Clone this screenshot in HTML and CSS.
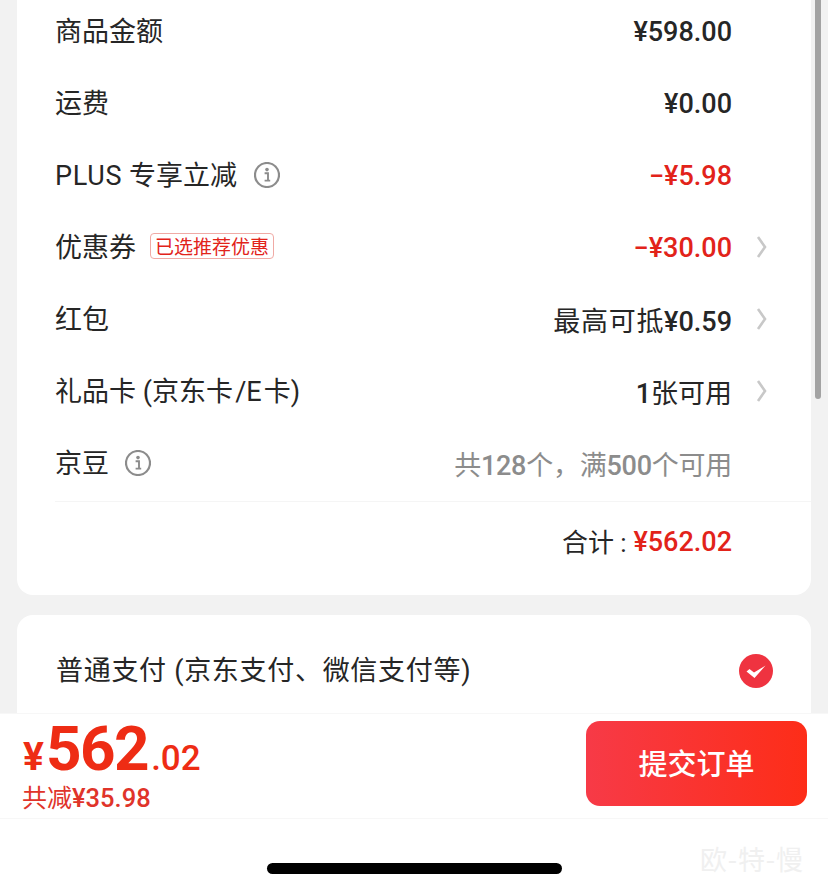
FILE: index.html
```html
<!DOCTYPE html>
<html lang="zh">
<head>
<meta charset="utf-8">
<title>提交订单</title>
<link rel="stylesheet" href="styles.css">
</head>
<body>
<main class="page">
  <section class="card summary">
    <div class="row"><div class="label">商品金额</div><div class="value num">¥598.00</div></div>
    <div class="row"><div class="label">运费</div><div class="value num">¥0.00</div></div>
    <div class="row">
      <div class="label latin"><span><span class="plus">PLUS</span> 专享立减</span>
        <svg class="info" viewBox="0 0 26 26"><circle cx="13" cy="13" r="12" fill="none" stroke="#8c8c8c" stroke-width="2.2"/><circle cx="13" cy="7.6" r="1.8" fill="#8c8c8c"/><path d="M10.6 11.2h3.4v7.2M10.6 18.6h5.6" fill="none" stroke="#8c8c8c" stroke-width="1.9"/></svg>
      </div>
      <div class="value num red">−¥5.98</div>
    </div>
    <div class="row has-arrow">
      <div class="label">优惠券<span class="tag">已选推荐优惠</span></div>
      <div class="value num red">−¥30.00</div>
      <svg class="arrow" viewBox="0 0 12 24"><path d="M2 2l7 10-7 10" fill="none" stroke="#c8c8c8" stroke-width="2.6"/></svg>
    </div>
    <div class="row has-arrow">
      <div class="label">红包</div>
      <div class="value num mixed"><span class="cjk wide">最高可抵</span>¥0.59</div>
      <svg class="arrow" viewBox="0 0 12 24"><path d="M2 2l7 10-7 10" fill="none" stroke="#c8c8c8" stroke-width="2.6"/></svg>
    </div>
    <div class="row has-arrow">
      <div class="label latin"><span>礼品卡 (<span class="tight">京东卡 /E 卡</span>)</span></div>
      <div class="value num mixed">1<span class="cjk">张可用</span></div>
      <svg class="arrow" viewBox="0 0 12 24"><path d="M2 2l7 10-7 10" fill="none" stroke="#c8c8c8" stroke-width="2.6"/></svg>
    </div>
    <div class="row">
      <div class="label"><span>京豆</span>
        <svg class="info near" viewBox="0 0 26 26"><circle cx="13" cy="13" r="12" fill="none" stroke="#8c8c8c" stroke-width="2.2"/><circle cx="13" cy="7.6" r="1.8" fill="#8c8c8c"/><path d="M10.6 11.2h3.4v7.2M10.6 18.6h5.6" fill="none" stroke="#8c8c8c" stroke-width="1.9"/></svg>
      </div>
      <div class="value num mixed muted"><span class="cjk">共</span>128<span class="cjk">个，满</span>500<span class="cjk">个可用</span></div>
    </div>
    <div class="total"><span class="total-label">合计<span class="colon">:</span></span><span class="value num red">¥562.02</span></div>
  </section>
  <section class="card pay">
    <div class="pay-label">普通支付 (京东支付、微信支付等)</div>
    <svg class="check" viewBox="0 0 34 34"><circle cx="17" cy="17" r="17" fill="#ef3340"/><path d="M7.5 17.5L10.5 15l4.5 3.6L26.5 11.5 15.5 24z" fill="#fff"/></svg>
  </section>
</main>
<div class="scrollbar"></div>
<footer class="bottom">
  <div class="bar">
    <div class="prices">
      <div class="price"><span class="cur">¥</span><span class="int">562</span><span class="dec">.02</span></div>
      <div class="saved"><span class="cjk">共减</span>¥35.98</div>
    </div>
    <button class="submit">提交订单</button>
  </div>
  <div class="home"><div class="indicator"></div><div class="mark">欧-特-慢</div></div>
</footer>
</body>
</html>
```
FILE: styles.css
```css
* { box-sizing: border-box; }
html, body { margin: 0; padding: 0; }
body {
  width: 828px;
  height: 891px;
  overflow: hidden;
  position: relative;
  background: #f2f2f2;
  color: #262626;
  font-family: "Roboto", "Noto Sans CJK SC", sans-serif;
}
.page { margin-top: -5px; padding: 0 17px; display: flex; flex-direction: column; gap: 20px; }
.card { background: #fff; border-radius: 0 0 16px 16px; }
.summary { padding: 0 0 0 38px; }
.row { height: 72px; display: flex; align-items: center; padding-right: 79px; }
.row.has-arrow { padding-right: 43px; }
.label { flex: 1; display: flex; align-items: center; padding-bottom: 4px; font-size: 27px; font-family: "Noto Sans CJK SC", sans-serif; }
.latin { font-family: "Roboto", "Noto Sans CJK SC", sans-serif; }
.plus { letter-spacing: 0.7px; }
.tight { word-spacing: -4.5px; }
.value { font-size: 27px; text-align: right; margin-top: 2px; }
.value.mixed { margin-top: 0; }
.num { font-family: "Roboto", "Noto Sans CJK SC", sans-serif; font-weight: 500; }
.cjk { font-weight: 400; }
.wide { letter-spacing: 0.7px; }
.red { color: #e2231a; }
.muted { color: #8c8c8c; letter-spacing: -0.25px; }
.info { width: 26px; height: 26px; margin-left: 17px; margin-top: 4px; }
.info.near { margin-left: 16px; }
.tag { margin-left: 14px; margin-top: 2px; font-size: 19px; line-height: 24px; height: 26px; padding: 0 4px; color: #e2231a; border: 1px solid #f0aaa5; border-radius: 4px; }
.arrow { width: 12px; height: 24px; margin-left: 24px; }
.total { margin-top: 2px; height: 94px; padding: 0 79px 16px 0; border-top: 1px solid #f5f5f5; display: flex; align-items: center; justify-content: flex-end; }
.total-label { font-size: 26px; font-family: "Noto Sans CJK SC", sans-serif; }
.colon { font-family: "Roboto", sans-serif; margin: 0 7px 0 6px; }
.pay { border-radius: 16px 16px 0 0; height: 200px; padding: 24px 38px 0 39px; display: flex; align-items: flex-start; justify-content: space-between; }
.pay-label { font-size: 27px; letter-spacing: 0.7px; line-height: 64px; font-family: "Roboto", "Noto Sans CJK SC", sans-serif; }
.check { width: 34px; height: 34px; margin-top: 15px; }
.scrollbar { position: absolute; left: 815px; top: 0; width: 6px; height: 399px; background: #a3a3a3; border-radius: 0 0 3px 3px; }
.bottom { position: absolute; left: 0; right: 0; bottom: 0; height: 178px; background: #fff; }
.bar { height: 106px; padding: 7px 21px 12px 23px; display: flex; justify-content: space-between; border-top: 1px solid #f7f7f7; border-bottom: 1px solid #f7f7f7; }
.prices { color: #e2231a; font-weight: 500; }
.price { display: flex; align-items: baseline; height: 58px; line-height: 56px; color: #ee2c14; font-weight: 700; }
.cur { font-size: 39px; margin-right: 2px; }
.int { font-size: 62px; letter-spacing: -1.5px; }
.dec { font-size: 35px; font-weight: 500; margin-left: 3px; }
.saved { font-size: 25.5px; line-height: 32px; margin-top: 3px; margin-left: -1px; color: #e0342a; }
.saved .cjk { font-size: 25px; }
.submit { width: 221px; height: 85px; padding: 0 0 4px; border: 0; border-radius: 14px; color: #fff; font-size: 29px; font-weight: 500; font-family: "Noto Sans CJK SC", sans-serif; background: linear-gradient(90deg, #f73a47, #fd2d18); }
.home { position: relative; height: 72px; }
.indicator { position: absolute; left: 267px; top: 44px; width: 295px; height: 11px; background: #000; border-radius: 6px; }
.mark { position: absolute; left: 700px; top: 20px; font-size: 27px; letter-spacing: 0.8px; color: #f0f0f0; font-family: "Noto Sans CJK SC", sans-serif; }
```
